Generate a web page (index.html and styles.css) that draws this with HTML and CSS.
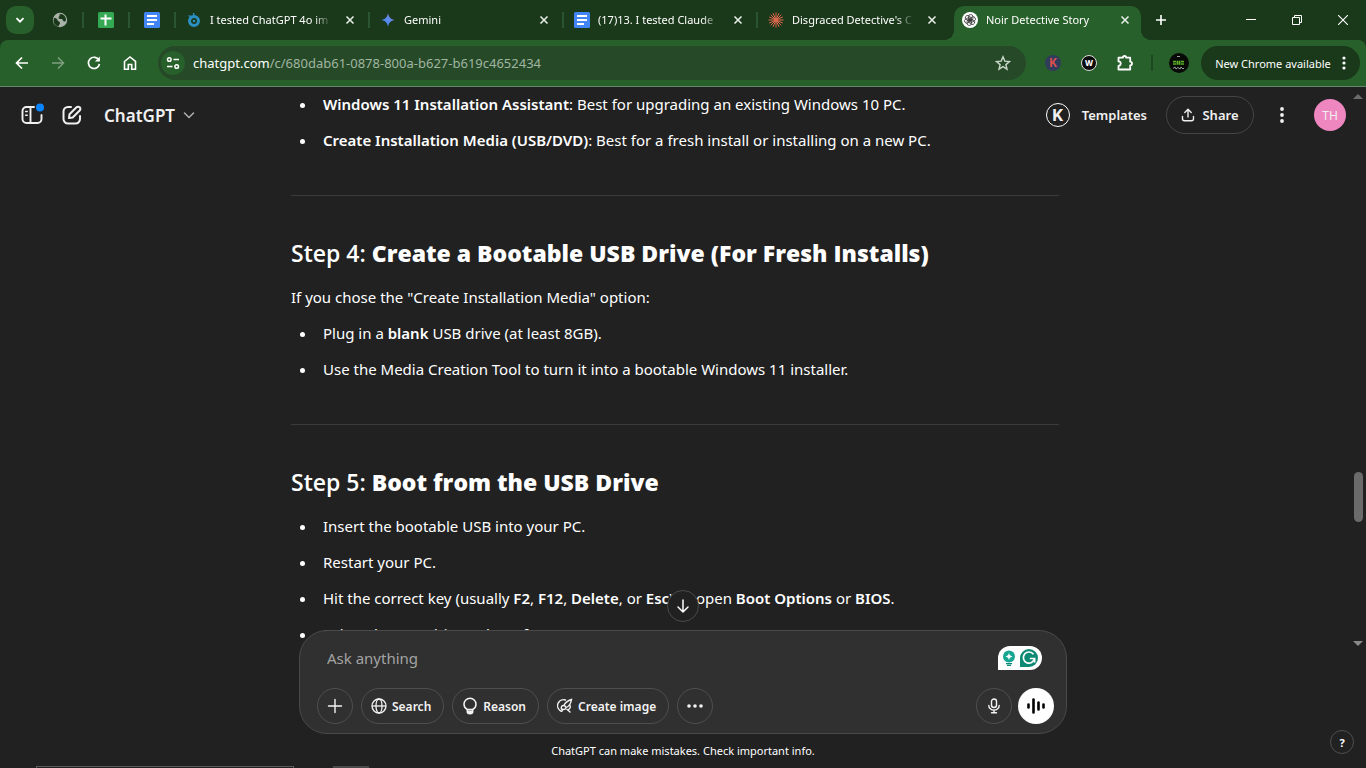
FILE: index.html
```html
<!DOCTYPE html>
<html lang="en">
<head>
  <meta charset="UTF-8">
  <meta name="viewport" content="width=device-width, initial-scale=1.0">
  <title>Noir Detective Story</title>
  <link rel="stylesheet" href="styles.css">
</head>
<body>
  <div class="tab-strip">
    <button class="tab-search" aria-label="Search tabs">
      <svg width="12" height="12" viewBox="0 0 12 12"><path d="M2.500 4.200 6 7.700l3.500-3.500" fill="none" stroke="#fff" stroke-width="1.800"/></svg>
    </button>
    <div class="pinned-tab">
      <svg width="16" height="16" viewBox="0 0 16 16"><circle cx="8" cy="8" r="7.200" fill="#a9b3aa"/><path d="M2 6c2 0 3 .5 3.500 2S8 9.500 8 11s-1 1.500-1.500 3.500C3.500 14 1.500 11.500 1.500 9zM7 2.500c1.500 1 0 2-.5 3s1.500 1.500 3 1.500 1 2 2.500 2.500 2-1 2-2C14 5 12 2.500 9.500 2z" fill="#1b381b"/></svg>
    </div>
    <span class="tab-sep"></span>
    <div class="pinned-tab">
      <svg width="16" height="16" viewBox="0 0 16 16"><rect width="16" height="16" rx="1.500" fill="#34a853"/><path d="M2.500 6.500h11M7.500 2.500v11" stroke="#fff" stroke-width="2"/></svg>
    </div>
    <span class="tab-sep"></span>
    <div class="pinned-tab">
      <svg width="16" height="16" viewBox="0 0 16 16"><rect width="16" height="16" rx="1.500" fill="#4285f4"/><path d="M3 4h10M3 8h10M3 12h7" stroke="#fff" stroke-width="1.800"/></svg>
    </div>
    <span class="tab-sep"></span>
    <div class="tab">
      <svg width="16" height="16" viewBox="0 0 16 16"><circle cx="8" cy="9" r="4.500" fill="none" stroke="#2b8fc0" stroke-width="3"/><circle cx="8" cy="9" r="1.300" fill="#2b8fc0"/><path d="M2.500 3.500c2 1.500 4 1.200 5.500.500L7.500 1" fill="none" stroke="#2b8fc0" stroke-width="1.500"/></svg>
      <span class="tab-title">I tested ChatGPT 4o im</span>
      <button class="tab-close" aria-label="Close tab"><svg width="10" height="10" viewBox="0 0 10 10"><path d="m1.500 1.500 7 7m0-7-7 7" stroke="#e6ece6" stroke-width="1.600"/></svg></button>
    </div>
    <span class="tab-sep"></span>
    <div class="tab">
      <svg width="16" height="16" viewBox="0 0 16 16"><defs><linearGradient id="gem" x1="0" x2="1" y1="1" y2="0"><stop offset="0" stop-color="#2f7de0"/><stop offset=".5" stop-color="#5b8def"/><stop offset="1" stop-color="#8f7bd0"/></linearGradient></defs><path d="M8 1c.6 4.200 2.800 6.400 7 7-4.200.6-6.400 2.800-7 7-.6-4.200-2.800-6.400-7-7 4.200-.6 6.400-2.800 7-7z" fill="url(#gem)"/></svg>
      <span class="tab-title">Gemini</span>
      <button class="tab-close" aria-label="Close tab"><svg width="10" height="10" viewBox="0 0 10 10"><path d="m1.500 1.500 7 7m0-7-7 7" stroke="#e6ece6" stroke-width="1.600"/></svg></button>
    </div>
    <span class="tab-sep"></span>
    <div class="tab">
      <svg width="16" height="16" viewBox="0 0 16 16"><rect width="16" height="16" rx="1.500" fill="#4285f4"/><path d="M3 4h10M3 8h10M3 12h7" stroke="#fff" stroke-width="1.800"/></svg>
      <span class="tab-title">(17)13. I tested Claude</span>
      <button class="tab-close" aria-label="Close tab"><svg width="10" height="10" viewBox="0 0 10 10"><path d="m1.500 1.500 7 7m0-7-7 7" stroke="#e6ece6" stroke-width="1.600"/></svg></button>
    </div>
    <span class="tab-sep"></span>
    <div class="tab">
      <svg width="16" height="16" viewBox="0 0 16 16"><path d="M8 .500v15M.500 8h15M2.700 2.700l10.600 10.600M13.300 2.700 2.700 13.300M5 1.200l6 13.600M1.200 11l13.600-6M1.300 5l13.400 6M11 1.200 5 14.800" stroke="#e0694e" stroke-width="1"/></svg>
      <span class="tab-title">Disgraced Detective's C</span>
      <button class="tab-close" aria-label="Close tab"><svg width="10" height="10" viewBox="0 0 10 10"><path d="m1.500 1.500 7 7m0-7-7 7" stroke="#e6ece6" stroke-width="1.600"/></svg></button>
    </div>
    <div class="tab tab-active">
      <svg width="16" height="16" viewBox="0 0 16 16"><circle cx="8" cy="8" r="8" fill="#fff"/><g fill="none" stroke="#333" stroke-width=".8"><rect x="6.500" y="2.500" width="4.400" height="6.500" rx="2.200"/><rect x="6.500" y="2.500" width="4.400" height="6.500" rx="2.200" transform="rotate(60 8 8)"/><rect x="6.500" y="2.500" width="4.400" height="6.500" rx="2.200" transform="rotate(120 8 8)"/><rect x="6.500" y="2.500" width="4.400" height="6.500" rx="2.200" transform="rotate(180 8 8)"/><rect x="6.500" y="2.500" width="4.400" height="6.500" rx="2.200" transform="rotate(240 8 8)"/><rect x="6.500" y="2.500" width="4.400" height="6.500" rx="2.200" transform="rotate(300 8 8)"/></g></svg>
      <span class="tab-title">Noir Detective Story</span>
      <button class="tab-close" aria-label="Close tab"><svg width="10" height="10" viewBox="0 0 10 10"><path d="m1.500 1.500 7 7m0-7-7 7" stroke="#e6ece6" stroke-width="1.600"/></svg></button>
    </div>
    <button class="new-tab" aria-label="New tab"><svg width="12" height="12" viewBox="0 0 12 12"><path d="M6 1v10M1 6h10" stroke="#fff" stroke-width="1.600"/></svg></button>
    <div class="window-controls">
      <button aria-label="Minimize"><svg width="10" height="10" viewBox="0 0 10 10"><path d="M0 4.500h10" stroke="#fff"/></svg></button>
      <button aria-label="Restore"><svg width="10" height="10" viewBox="0 0 10 10"><path d="M.5 2.500h7v7h-7zM2.500 2.500v-2h7v7h-2" fill="none" stroke="#fff"/></svg></button>
      <button aria-label="Close"><svg width="10" height="10" viewBox="0 0 10 10"><path d="m0 0 10 10M10 0 0 10" stroke="#fff" stroke-width="1.100"/></svg></button>
    </div>
  </div>

  <div class="toolbar-wrap">
    <div class="toolbar">
      <button class="tool" aria-label="Back"><svg width="16" height="16" viewBox="0 0 16 16"><path d="M14 8H3M8 2.500 2.500 8 8 13.500" fill="none" stroke="#fff" stroke-width="1.700"/></svg></button>
      <button class="tool tool-off" aria-label="Forward"><svg width="16" height="16" viewBox="0 0 16 16"><path d="M2 8h11M8 2.500 13.500 8 8 13.500" fill="none" stroke="#fff" stroke-width="1.500"/></svg></button>
      <button class="tool" aria-label="Reload"><svg width="16" height="16" viewBox="0 0 16 16"><path d="M13 5.300A5.600 5.600 0 1 0 13.500 9" fill="none" stroke="#fff" stroke-width="1.700"/><path d="M13.900 1.500v5H8.900z" fill="#fff"/></svg></button>
      <button class="tool" aria-label="Home"><svg width="16" height="16" viewBox="0 0 16 16"><path d="M2.500 6.500 8 2l5.500 4.500v7.700H9.700V9.500H6.300v4.700H2.500z" fill="none" stroke="#fff" stroke-width="1.600"/></svg></button>
      <div class="url-bar">
        <button class="site-info" aria-label="Site information"><svg width="14" height="14" viewBox="0 0 14 14"><g fill="none" stroke="#fff" stroke-width="1.500"><circle cx="3.300" cy="3.500" r="1.800"/><circle cx="10.700" cy="10.500" r="1.800"/><path d="M7.500 3.500H13M1 10.500h5.500"/></g></svg></button>
        <span class="url">chatgpt.com<span class="url-path">/c/680dab61-0878-800a-b627-b619c4652434</span></span>
        <button class="bookmark" aria-label="Bookmark this tab"><svg width="16" height="16" viewBox="0 0 16 16"><path d="m8 1.800 1.800 4.300 4.700.4-3.600 3.100 1.100 4.600L8 11.700l-4 2.500 1.100-4.600L1.500 6.500l4.700-.4z" fill="none" stroke="#c9d6c9" stroke-width="1.400"/></svg></button>
      </div>
      <button class="tool" aria-label="Extension K"><span class="ext ext-k">K</span></button>
      <button class="tool" aria-label="Extension W"><span class="ext ext-w">W</span></button>
      <button class="tool" aria-label="Extensions"><svg width="18" height="18" viewBox="0 0 18 18"><path d="M2.500 3.700h4.300a1.700 1.700 0 0 1 3.400 0h4v4a1.700 1.700 0 0 1 0 3.600v4.200H2.500v-3.700a2.200 2.200 0 0 0 0-4.400z" fill="none" stroke="#fff" stroke-width="1.800" stroke-linejoin="round"/></svg></button>
      <span class="tool-sep"></span>
      <button class="profile" aria-label="Profile"><svg width="20" height="20" viewBox="0 0 20 20"><circle cx="10" cy="10" r="10" fill="#080a08"/><path d="M4 7.500h11v4.500H4z" fill="#264d12"/><path d="M4 8.500h3M4 11h3M8.500 8v3.500M10.500 8v3.500M12 8.500h3M12 11h3" stroke="#62b526" stroke-width="1.200"/><path d="M8 3.500h3M4 15.500l2-1.500 1 2 2-1.500 2 1.500 1-2 2 2 1-1" fill="none" stroke="#a9b0a9" stroke-width=".9"/></svg></button>
      <button class="update">New Chrome available<svg width="4" height="16" viewBox="0 0 4 16" fill="#fff"><circle cx="2" cy="3" r="1.600"/><circle cx="2" cy="8" r="1.600"/><circle cx="2" cy="13" r="1.600"/></svg></button>
    </div>
  </div>

  <div class="app">
    <header class="app-header">
      <button class="icon-button" aria-label="Open sidebar">
        <svg width="24" height="24" viewBox="0 0 24 24"><g fill="none" stroke="#f0f0f0" stroke-width="1.900" stroke-linecap="round"><path d="M14 4H6.500A4 4 0 0 0 2.500 8v8a4 4 0 0 0 4 4h11a4 4 0 0 0 4-4v-4M10.500 4v16"/><path d="M5.700 8.500h1.500M5.700 12.300h1.500" stroke-width="1.600"/></g><circle cx="20" cy="4.500" r="4" fill="#0a84ff"/></svg>
      </button>
      <button class="icon-button" aria-label="New chat">
        <svg width="24" height="24" viewBox="0 0 24 24"><g fill="none" stroke="#f0f0f0" stroke-width="2" stroke-linecap="round" stroke-linejoin="round"><path d="M11 4H8a4.500 4.500 0 0 0-4.500 4.500V16A4.500 4.500 0 0 0 8 20.500h7.500A4.500 4.500 0 0 0 20 16v-3"/><path d="m9 15 .5-3.700 7-7a2 2 0 0 1 3.200 3.200l-7 7z"/></g></svg>
      </button>
      <button class="model">ChatGPT<svg width="12" height="12" viewBox="0 0 12 12"><path d="m1.500 4 4.500 4.500L10.500 4" fill="none" stroke="#b0b0b0" stroke-width="1.500" stroke-linecap="round"/></svg></button>
      <div class="header-right">
        <button class="templates"><span class="k-badge">K</span>Templates</button>
        <button class="share"><svg width="14" height="14" viewBox="0 0 14 14"><path d="M7 9V1.500M3.800 4.500 7 1.300l3.200 3.200M1.500 8.500v2.300a2 2 0 0 0 2 2h7a2 2 0 0 0 2-2V8.500" fill="none" stroke="#f0f0f0" stroke-width="1.400" stroke-linecap="round" stroke-linejoin="round"/></svg>Share</button>
        <button class="more" aria-label="More"><svg width="4" height="16" viewBox="0 0 4 16" fill="#f0f0f0"><circle cx="2" cy="2" r="1.900"/><circle cx="2" cy="8" r="1.900"/><circle cx="2" cy="14" r="1.900"/></svg></button>
        <button class="avatar">TH</button>
      </div>
    </header>

    <div class="thread">
      <main class="messages">
        <article class="answer">
          <ul>
            <li><strong>Windows 11 Installation Assistant</strong>: Best for upgrading an existing Windows 10 PC.</li>
            <li><strong>Create Installation Media (USB/DVD)</strong>: Best for a fresh install or installing on a new PC.</li>
          </ul>
          <hr>
          <h3>Step 4: <strong>Create a Bootable USB Drive (For Fresh Installs)</strong></h3>
          <p>If you chose the "Create Installation Media" option:</p>
          <ul>
            <li>Plug in a <strong>blank</strong> USB drive (at least 8GB).</li>
            <li>Use the Media Creation Tool to turn it into a bootable Windows 11 installer.</li>
          </ul>
          <hr>
          <h3>Step 5: <strong>Boot from the USB Drive</strong></h3>
          <ul>
            <li>Insert the bootable USB into your PC.</li>
            <li>Restart your PC.</li>
            <li>Hit the correct key (usually <strong>F2</strong>, <strong>F12</strong>, <strong>Delete</strong>, or <strong>Esc</strong>) to open <strong>Boot Options</strong> or <strong>BIOS</strong>.</li>
            <li>Select the USB drive to boot from.</li>
          </ul>
        </article>
      </main>
      <div class="scrollbar">
        <svg width="10" height="5" viewBox="0 0 10 5"><path d="M0 5 5 0l5 5z" fill="#6b6b6b"/></svg>
        <div class="scroll-thumb"></div>
        <svg width="10" height="5" viewBox="0 0 10 5"><path d="m0 0 5 5 5-5z" fill="#8a8a8a"/></svg>
      </div>
    </div>

    <div class="composer-area">
      <button class="scroll-down" aria-label="Scroll to bottom"><svg width="16" height="16" viewBox="0 0 16 16"><path d="M8 2v12M3 9l5 5 5-5" fill="none" stroke="#fff" stroke-width="1.500" stroke-linecap="round" stroke-linejoin="round"/></svg></button>
      <form class="composer">
        <div class="prompt-row">
          <textarea class="prompt" rows="1" placeholder="Ask anything" aria-label="Ask anything"></textarea>
          <div class="grammar">
            <svg width="14" height="16" viewBox="0 0 14 16"><circle cx="7" cy="6.500" r="6" fill="#15a693"/><path d="M4 13.700h6M5 15.300h4" stroke="#0d8a77" stroke-width="1.300"/><path d="M7 2.800c.4 2.300 1.400 3.300 3.700 3.700C8.400 6.900 7.400 7.900 7 10.200 6.600 7.900 5.600 6.900 3.300 6.500 5.600 6.100 6.600 5.100 7 2.800z" fill="#fff"/></svg>
            <svg width="18" height="18" viewBox="0 0 18 18"><path d="M9 0a9 9 0 1 1 0 18H0V9a9 9 0 0 1 9-9z" fill="#0e8a74"/><path d="M13.500 5.300A5.600 5.600 0 1 0 14.500 9.500H9.800M14.600 13.500v-4" fill="none" stroke="#fff" stroke-width="1.700"/></svg>
          </div>
        </div>
        <div class="composer-actions">
          <button type="button" class="pill pill-round" aria-label="Add files"><svg width="16" height="16" viewBox="0 0 16 16"><path d="M8 1.500v13M1.500 8h13" stroke="#f3f3f3" stroke-width="1.400" stroke-linecap="round"/></svg></button>
          <button type="button" class="pill"><svg width="16" height="16" viewBox="0 0 16 16"><g fill="none" stroke="#f3f3f3" stroke-width="1.300"><circle cx="8" cy="8" r="7"/><ellipse cx="8" cy="8" rx="3" ry="7"/><path d="M1 8h14"/></g></svg>Search</button>
          <button type="button" class="pill"><svg width="16" height="18" viewBox="0 0 16 18"><path d="M5.300 12.500C3.500 11.500 2 9.500 2 7.200a6 6 0 0 1 12 0c0 2.300-1.500 4.300-3.300 5.300zM5.300 12.500v2.200c0 1.200 1 2 2.700 2s2.700-.8 2.700-2v-2.200" fill="none" stroke="#f3f3f3" stroke-width="1.500"/><path d="M5.500 13.500h5v2l-1.500 1H7l-1.500-1z" fill="#f3f3f3"/></svg>Reason</button>
          <button type="button" class="pill"><svg width="16" height="16" viewBox="0 0 16 16"><g fill="none" stroke="#f3f3f3" stroke-width="1.400" stroke-linecap="round"><path d="M8.500 2A6 6 0 0 0 3 12.500c1 1.200 2.500 1.200 2.200-.5M12.800 7c1.200 2 0 4.500-2.300 4.700L13 14"/><path d="M14.500 1.500C11 2.500 8 5 6.800 7.500c1.200.2 2 1 2.200 2.200C11.500 8.500 14 5.500 14.500 1.500zM6.800 7.500c-2-.2-2.900 1.300-2.400 3.500C6.500 12 8.800 11.500 9 9.700"/></g></svg>Create image</button>
          <button type="button" class="pill pill-round" aria-label="More tools"><svg width="16" height="4" viewBox="0 0 16 4" fill="#f3f3f3"><circle cx="2" cy="2" r="1.800"/><circle cx="8" cy="2" r="1.800"/><circle cx="14" cy="2" r="1.800"/></svg></button>
          <button type="button" class="pill pill-round pill-mic" aria-label="Dictate"><svg width="14" height="16" viewBox="0 0 14 16"><g fill="none" stroke="#f3f3f3" stroke-width="1.400" stroke-linecap="round"><rect x="4.500" y="1" width="5" height="8.500" rx="2.500"/><path d="M1.800 7.500a5.200 4.600 0 0 0 10.400 0M7 12v2.500M4.500 14.700h5"/></g></svg></button>
          <button type="button" class="voice" aria-label="Voice mode"><svg width="20" height="18" viewBox="0 0 20 18"><path d="M2.500 7.500v3M7.500 2.500v13M12.500 5.500v7M17.500 7.500v3" stroke="#000" stroke-width="2.600" stroke-linecap="round"/></svg></button>
        </div>
      </form>
      <p class="disclaimer">ChatGPT can make mistakes. Check important info.</p>
    </div>
    <button class="help">?</button>
    <div class="peek">
      <span class="peek-tip"></span>
      <span class="peek-tab"></span>
    </div>
  </div>
</body>
</html>
```

FILE: styles.css
```css
* {
  margin: 0;
  padding: 0;
  box-sizing: border-box;
}
body {
  font-family: 'Noto Sans', 'Open Sans', sans-serif;
  background-color: #212121;
  color: #fff;
  height: 100vh;
  display: flex;
  flex-direction: column;
  overflow: hidden;
}
button {
  font-family: inherit;
  color: inherit;
  background: none;
  border: none;
  display: flex;
  align-items: center;
  justify-content: center;
  flex-shrink: 0;
  cursor: pointer;
}
svg {
  flex-shrink: 0;
}

/* Browser tabs */
.tab-strip {
  display: flex;
  align-items: center;
  height: 40px;
  flex-shrink: 0;
  padding-left: 6px;
  background-color: #1a381a;
}
.tab-search {
  width: 28px;
  height: 28px;
  margin-right: 3px;
  border-radius: 10px;
  background-color: #28602b;
}
.pinned-tab {
  display: flex;
  justify-content: center;
  width: 46px;
  flex-shrink: 0;
}
.tab-sep {
  width: 2px;
  height: 16px;
  margin: 0 -1px;
  flex-shrink: 0;
  background-color: #2a5530;
}
.tab {
  display: flex;
  align-items: center;
  width: 194px;
  height: 28px;
  padding: 0 11px;
  gap: 8px;
}
.tab-title {
  flex: 1;
  font-size: 11px;
  line-height: 16px;
  white-space: nowrap;
  overflow: hidden;
  mask-image: linear-gradient(to right, #000 84%, transparent 98%);
}
.tab-close {
  width: 16px;
  height: 16px;
}
.tab-active {
  position: relative;
  align-self: flex-end;
  width: 187px;
  height: 34px;
  margin-left: 3px;
  padding: 0 8px 6px;
  border-radius: 10px 10px 0 0;
  background-color: #28602b;
}
.tab-active::before,
.tab-active::after {
  content: '';
  position: absolute;
  bottom: 0;
  left: -10px;
  width: 10px;
  height: 10px;
  background: radial-gradient(circle at 0 0, transparent 10px, #28602b 10px);
}
.tab-active::after {
  left: 100%;
  background: radial-gradient(circle at 100% 0, transparent 10px, #28602b 10px);
}
.new-tab {
  width: 28px;
  height: 28px;
  margin-left: 6px;
}
.window-controls {
  display: flex;
  margin-left: auto;
}
.window-controls button {
  width: 46px;
  height: 40px;
}

/* Address bar */
.toolbar-wrap {
  flex-shrink: 0;
  background-color: #1a381a;
}
.toolbar {
  display: flex;
  align-items: center;
  height: 47px;
  padding: 0 6px 0 4px;
  border-bottom: 1px solid #66886a;
  border-radius: 8px 8px 0 0;
  background-color: #28602b;
}
.tool {
  width: 36px;
  height: 34px;
}
.tool-off {
  opacity: 0.4;
}
.url-bar {
  flex: 1;
  display: flex;
  align-items: center;
  height: 34px;
  margin: 0 9px 0 10px;
  padding: 0 12px 0 3px;
  border-radius: 17px;
  background-color: #264a28;
}
.site-info {
  width: 24px;
  height: 24px;
  margin-right: 8px;
  border-radius: 50%;
  background-color: #28602b;
}
.url {
  flex: 1;
  font-size: 13px;
  line-height: 20px;
}
.url-path {
  color: #a0b5a1;
}
.bookmark {
  width: 22px;
  height: 22px;
}
.ext {
  width: 16px;
  height: 16px;
  border-radius: 50%;
  line-height: 16px;
  text-align: center;
}
.ext-k {
  font: bold 12px/16px Roboto, sans-serif;
  color: #d9504f;
  background-color: #303c5c;
}
.ext-w {
  font-size: 8px;
  font-weight: 800;
  line-height: 14px;
  border: 1px solid #ddd;
  background-color: #0b0b0b;
}
.tool-sep {
  width: 2px;
  height: 16px;
  margin: 0 16px 0 8px;
  background-color: #1c4a20;
}
.profile {
  width: 20px;
  height: 20px;
}
.update {
  width: 159px;
  height: 34px;
  margin-left: 12px;
  gap: 11px;
  border-radius: 17px;
  background-color: #1a381a;
  font-size: 11px;
}

/* Chat page */
.app {
  position: relative;
  flex: 1;
  min-height: 0;
  display: flex;
  flex-direction: column;
}
.app-header {
  position: absolute;
  top: 0;
  left: 0;
  right: 0;
  z-index: 2;
  display: flex;
  align-items: center;
  height: 56px;
  padding: 0 20px 0 12px;
  color: #f0f0f0;
}
.icon-button {
  width: 40px;
  height: 40px;
}
.model {
  gap: 8px;
  margin-left: 12px;
  font-size: 17px;
  font-weight: 600;
}
.header-right {
  display: flex;
  align-items: center;
  margin-left: auto;
}
.templates {
  gap: 12px;
  font-size: 13px;
  font-weight: 600;
}
.k-badge {
  width: 24px;
  height: 24px;
  border: 1px solid #fff;
  border-radius: 50%;
  font: bold 17px/22px Roboto, sans-serif;
}
.share {
  width: 88px;
  height: 38px;
  margin-left: 19px;
  gap: 7px;
  border: 1px solid #454545;
  border-radius: 19px;
  font-size: 13px;
  font-weight: 600;
}
.more {
  width: 36px;
  height: 36px;
  margin: 0 14px 0 10px;
}
.avatar {
  width: 32px;
  height: 32px;
  border-radius: 50%;
  background-color: #ee87c0;
  font-size: 12px;
}
.thread {
  flex: 1;
  min-height: 0;
  display: flex;
}
.messages {
  flex: 1;
  padding: 3px 16px 0;
  overflow: hidden;
}
.answer {
  max-width: 768px;
  margin: 0 auto;
  font-size: 15px;
  line-height: 28px;
}
.answer strong {
  font-weight: 600;
}
.answer ul {
  padding-left: 26px;
}
.answer li {
  padding-left: 6px;
}
.answer li,
.answer p {
  margin-bottom: 8px;
}
.answer hr {
  margin: 41px 0;
  border: none;
  border-top: 1px solid #3b3b3b;
}
.answer h3 {
  margin-bottom: 14px;
  font-family: 'Open Sans', 'Noto Sans', sans-serif;
  font-size: 23px;
  line-height: 32px;
  font-weight: 600;
}
.answer h3 strong {
  font-weight: 800;
}
.scrollbar {
  display: flex;
  flex-direction: column;
  align-items: center;
  justify-content: space-between;
  width: 16px;
  padding: 7px 0 4px;
}
.scroll-thumb {
  width: 9px;
  height: 50px;
  margin-top: 253px;
  border-radius: 5px;
  background-color: #6b6b6b;
}

/* Composer */
.composer-area {
  position: relative;
  flex-shrink: 0;
  margin-top: -20px;
  padding: 0 16px;
}
.scroll-down {
  position: absolute;
  bottom: 100%;
  left: 50%;
  width: 32px;
  height: 32px;
  margin: 0 0 8px -16px;
  border: 1px solid #4a4a4a;
  border-radius: 50%;
  background-color: #212121;
}
.composer {
  max-width: 768px;
  height: 104px;
  margin: 0 auto;
  padding: 15px 12px 9px 17px;
  display: flex;
  flex-direction: column;
  justify-content: space-between;
  border: 1px solid #4a4a4a;
  border-radius: 28px;
  background-color: #303030;
}
.prompt-row {
  display: flex;
  align-items: flex-start;
  padding: 0 12px 0 10px;
}
.prompt {
  flex: 1;
  height: 24px;
  border: none;
  outline: none;
  resize: none;
  overflow: hidden;
  background: none;
  color: #fff;
  font: 15px/24px 'Noto Sans', 'Open Sans', sans-serif;
}
.prompt::placeholder {
  color: #a3a3a3;
}
.grammar {
  display: flex;
  align-items: center;
  justify-content: center;
  gap: 4px;
  width: 44px;
  height: 24px;
  border-radius: 12px 12px 12px 0;
  background-color: #fff;
}
.composer-actions {
  display: flex;
  gap: 8px;
}
.pill {
  height: 36px;
  padding: 0 12px 0 9px;
  gap: 5px;
  border: 1px solid #4f4f4f;
  border-radius: 18px;
  color: #f3f3f3;
  font-size: 12px;
  font-weight: 600;
}
.pill-round {
  width: 36px;
  padding: 0;
}
.pill-mic {
  margin-left: auto;
}
.voice {
  width: 36px;
  height: 36px;
  margin-left: -2px;
  border-radius: 50%;
  background-color: #fff;
}
.disclaimer {
  padding: 9px 0;
  text-align: center;
  font-size: 11px;
  line-height: 16px;
}
.help {
  position: absolute;
  right: 12px;
  bottom: 14px;
  width: 24px;
  height: 24px;
  border: 1px solid #4f4f4f;
  border-radius: 50%;
  font-size: 11px;
  font-weight: 700;
}
.peek {
  position: absolute;
  left: 36px;
  bottom: 0;
  display: flex;
  gap: 39px;
}
.peek-tip {
  width: 258px;
  height: 2px;
  border: 1px solid #5c5c5c;
  border-bottom: none;
}
.peek-tab {
  width: 36px;
  height: 2px;
  background-color: #4a4a4a;
}

@media (max-width: 900px) {
  .templates,
  .tab {
    display: none;
  }
}
```
